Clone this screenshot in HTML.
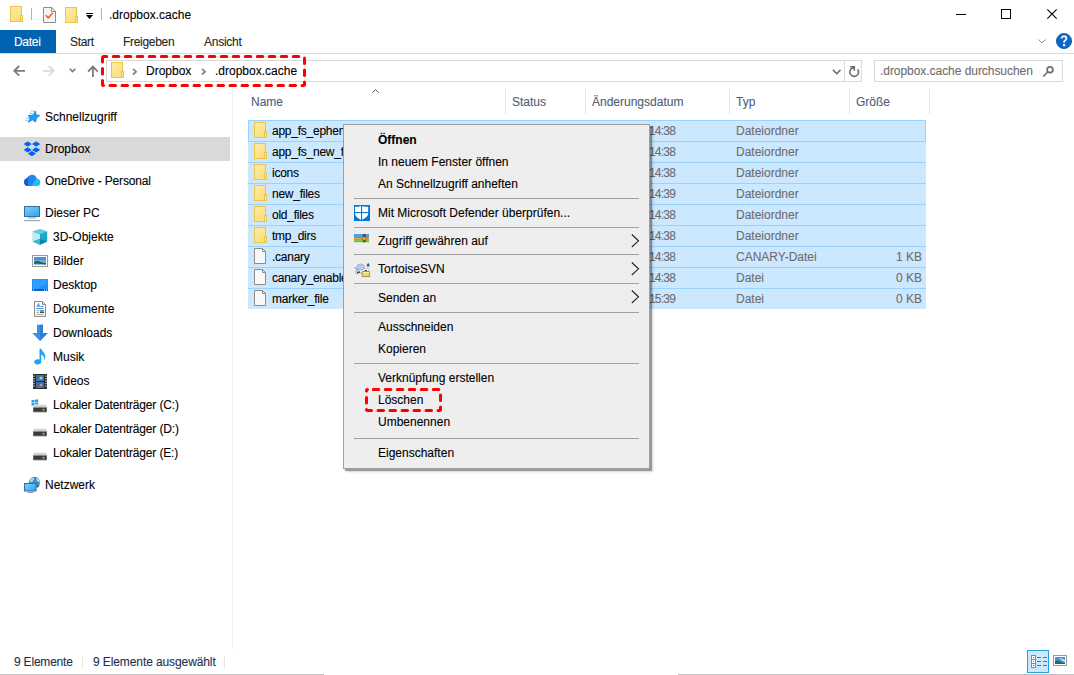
<!DOCTYPE html>
<html><head><meta charset="utf-8">
<style>
*{margin:0;padding:0;box-sizing:border-box}
html,body{width:1074px;height:675px;overflow:hidden;background:#fff}
body{position:relative;font-family:"Liberation Sans",sans-serif;font-size:12px;color:#000}
.a{position:absolute}
.t{position:absolute;white-space:nowrap;line-height:16px;-webkit-text-stroke:0.1px currentColor}
svg{position:absolute;overflow:visible}
.hd{color:#4c607a}
.sep{position:absolute;width:1px;background:#e5e5e5}
.g{color:#6d6d6d}
</style></head><body>
<svg width="0" height="0" style="position:absolute"><defs>
<linearGradient id="fg" x1="0" y1="0" x2="0.6" y2="1"><stop offset="0" stop-color="#fdeba6"/><stop offset="1" stop-color="#fbdf80"/></linearGradient>
<linearGradient id="od" x1="0" y1="0" x2="1" y2="0.3"><stop offset="0" stop-color="#1552c8"/><stop offset="0.5" stop-color="#1f8af0"/><stop offset="1" stop-color="#22c6f6"/></linearGradient>
<linearGradient id="scr" x1="0" y1="0" x2="1" y2="1"><stop offset="0" stop-color="#7fd0fb"/><stop offset="1" stop-color="#2aa2f2"/></linearGradient>
<linearGradient id="drv" x1="0" y1="0" x2="0" y2="1"><stop offset="0" stop-color="#e8e8e8"/><stop offset="1" stop-color="#b8b8b8"/></linearGradient>
</defs></svg>
<svg style="left:10px;top:6px" width="13" height="16"><rect x="0.5" y="0.5" width="11" height="15" fill="url(#fg)" stroke="#eac548"/><rect x="10.5" y="9.5" width="2" height="6" fill="#fde68e" stroke="#eac548"/></svg>
<div class="a" style="left:31px;top:8px;width:1px;height:12px;background:#b4b4b4"></div>
<svg style="left:43px;top:7px" width="13" height="16"><path d="M0.5 0.5H8.8L12.5 4.2V15.5H0.5Z" fill="#f4f4f4" stroke="#8c8c8c"/><path d="M8.5 0.5V4.5H12.5" fill="none" stroke="#8c8c8c"/><path d="M2.8 8.3L5.2 10.8L9.8 6" fill="none" stroke="#ef5b25" stroke-width="1.5"/></svg>
<svg style="left:65px;top:7px" width="13" height="16"><rect x="0.5" y="0.5" width="11" height="15" fill="url(#fg)" stroke="#eac548"/><rect x="10.5" y="9.5" width="2" height="6" fill="#fde68e" stroke="#eac548"/></svg>
<svg style="left:86px;top:12px" width="8" height="8"><rect x="0" y="1" width="7" height="1" fill="#000"/><path d="M0 3H7L3.5 7Z" fill="#000"/></svg>
<div class="a" style="left:101px;top:8px;width:1px;height:12px;background:#b4b4b4"></div>
<div class="t" style="left:109px;top:7px;">.dropbox.cache</div>
<div class="a" style="left:956px;top:14px;width:10px;height:1px;background:#000"></div>
<svg style="left:1001px;top:9px" width="11" height="11"><rect x="0.5" y="0.5" width="9" height="9" fill="none" stroke="#000"/></svg>
<svg style="left:1047px;top:9px" width="11" height="11"><path d="M0.3 0.3L9.7 9.7M9.7 0.3L0.3 9.7" stroke="#000" stroke-width="1.1"/></svg>
<div class="a" style="left:0;top:30px;width:56px;height:23px;background:#0063b1"></div>
<div class="t" style="left:14px;top:34px;color:#fff;letter-spacing:-0.3px">Datei</div>
<div class="t" style="left:70px;top:34px;color:#262626;letter-spacing:-0.3px">Start</div>
<div class="t" style="left:123px;top:34px;color:#262626;letter-spacing:-0.3px">Freigeben</div>
<div class="t" style="left:204px;top:34px;color:#262626;letter-spacing:-0.25px">Ansicht</div>
<svg style="left:1038px;top:39px" width="9" height="6"><path d="M0.5 0.5L4 4L7.5 0.5" fill="none" stroke="#8c8c8c"/></svg>
<svg style="left:1056px;top:33px" width="16" height="16"><circle cx="8" cy="8" r="7.6" fill="#0a66c8" stroke="#0b4f9e" stroke-width="0.8"/><path d="M5.6 5.6C5.6 4 6.6 3.3 8 3.3C9.5 3.3 10.4 4.2 10.4 5.4C10.4 6.6 9.6 7.1 8.9 7.6C8.3 8 8.1 8.4 8.1 9.3V9.8" fill="none" stroke="#eaf2fb" stroke-width="1.9"/><rect x="7" y="11" width="2.2" height="2.2" fill="#eaf2fb"/></svg>
<div class="a" style="left:0;top:53px;width:1074px;height:1px;background:#dadbdc"></div>
<svg style="left:13px;top:65px" width="13" height="12"><path d="M12 5.8H1.8M6.2 1L1.3 5.8L6.2 10.6" fill="none" stroke="#7a7a7a" stroke-width="1.8"/></svg>
<svg style="left:43px;top:65px" width="13" height="12"><path d="M0 5.8H10.2M5.8 1L10.7 5.8L5.8 10.6" fill="none" stroke="#d9d9d9" stroke-width="1.8"/></svg>
<svg style="left:69px;top:68px" width="8" height="5"><path d="M0.7 0.7L3.5 3.5L6.3 0.7" fill="none" stroke="#7a7a7a" stroke-width="1.6"/></svg>
<svg style="left:87px;top:65px" width="12" height="13"><path d="M5.9 12V1.8M1.1 6.6L5.9 1.6L10.7 6.6" fill="none" stroke="#7a7a7a" stroke-width="1.8"/></svg>
<div class="a" style="left:106px;top:60px;width:756px;height:22px;border:1px solid #d9d9d9"></div>
<div class="a" style="left:844px;top:60px;width:1px;height:22px;background:#d9d9d9"></div>
<svg style="left:111px;top:62px" width="13" height="16"><rect x="0.5" y="0.5" width="11" height="15" fill="url(#fg)" stroke="#eac548"/><rect x="10.5" y="9.5" width="2" height="6" fill="#fde68e" stroke="#eac548"/></svg>
<svg style="left:132px;top:68px" width="6" height="8"><path d="M1 0.9L4 3.7L1 6.5" fill="none" stroke="#858585" stroke-width="1.8"/></svg>
<div class="t" style="left:146px;top:63px;">Dropbox</div>
<svg style="left:201px;top:68px" width="6" height="8"><path d="M1 0.9L4 3.7L1 6.5" fill="none" stroke="#858585" stroke-width="1.8"/></svg>
<div class="t" style="left:215px;top:63px;">.dropbox.cache</div>
<svg style="left:832px;top:69px" width="10" height="6"><path d="M0.9 0.9L4.7 4.7L8.5 0.9" fill="none" stroke="#6d6d6d" stroke-width="1.6"/></svg>
<svg style="left:846px;top:64px" width="14" height="14"><path d="M8 3.6A4.4 4.4 0 1 0 11.6 5.2" fill="none" stroke="#6d6d6d" stroke-width="1.6"/><path d="M4.2 2.7H8.3V6.8" fill="none" stroke="#6d6d6d" stroke-width="1.6"/></svg>
<div class="a" style="left:874px;top:60px;width:189px;height:22px;border:1px solid #d9d9d9"></div>
<div class="t" style="left:880px;top:63px;color:#6d6d6d;letter-spacing:-0.05px">.dropbox.cache durchsuchen</div>
<svg style="left:1042px;top:66px" width="12" height="12"><circle cx="8" cy="3.8" r="2.9" fill="none" stroke="#6d6d6d" stroke-width="1.7"/><path d="M5.8 6L1.3 10.5" stroke="#6d6d6d" stroke-width="1.7"/></svg>
<svg style="left:0;top:0" width="1074" height="675"><rect x="102.5" y="56.5" width="202" height="29" fill="none" stroke="#ff0000" stroke-width="3" stroke-dasharray="5.5 6.5" stroke-dashoffset="2.2" stroke-linecap="round" rx="1"/></svg>
<div class="a" style="left:232px;top:89px;width:1px;height:560px;background:#f0f0f0"></div>
<div class="a" style="left:0;top:137px;width:230px;height:24px;background:#d9d9d9"></div>
<div class="t" style="left:45px;top:109px;">Schnellzugriff</div>
<div class="t" style="left:45px;top:141px;">Dropbox</div>
<div class="t" style="left:45px;top:173px;letter-spacing:-0.15px">OneDrive - Personal</div>
<div class="t" style="left:45px;top:205px;">Dieser PC</div>
<div class="t" style="left:53px;top:229px;">3D-Objekte</div>
<div class="t" style="left:53px;top:253px;">Bilder</div>
<div class="t" style="left:53px;top:277px;">Desktop</div>
<div class="t" style="left:53px;top:301px;">Dokumente</div>
<div class="t" style="left:53px;top:325px;">Downloads</div>
<div class="t" style="left:53px;top:349px;">Musik</div>
<div class="t" style="left:53px;top:373px;">Videos</div>
<div class="t" style="left:53px;top:397px;letter-spacing:-0.15px">Lokaler Datenträger (C:)</div>
<div class="t" style="left:53px;top:421px;letter-spacing:-0.15px">Lokaler Datenträger (D:)</div>
<div class="t" style="left:53px;top:445px;letter-spacing:-0.15px">Lokaler Datenträger (E:)</div>
<div class="t" style="left:45px;top:477px;">Netzwerk</div>
<svg style="left:22px;top:108px" width="20" height="16"><path d="M3 12.3H6.2M4 10.3H7.1M7.1 5.3H10.4M9 3.1H13.3" stroke="#58b4f0" stroke-width="1" opacity="0.7"/><path d="M13.5 3L14.2 7.1L17.9 7.5L14.6 10.1L13.6 14.1L10.5 11.9L6.3 14.3L8 10.1L6.2 7.5L10.9 7.1Z" fill="#1ea0f2" stroke="#0d7fd6" stroke-width="0.7" stroke-linejoin="round"/></svg>
<svg style="left:22px;top:140px" width="20" height="18"><g fill="#0061fe" stroke="#0061fe" stroke-width="1" stroke-linejoin="round"><path d="M2.3000000000000003 4L5.7 1.9L9.1 4L5.7 6.1Z"/><path d="M10.7 4L14.1 1.9L17.5 4L14.1 6.1Z"/><path d="M2.3000000000000003 9.9L5.7 7.800000000000001L9.1 9.9L5.7 12.0Z"/><path d="M10.7 9.9L14.1 7.800000000000001L17.5 9.9L14.1 12.0Z"/><path d="M6.5 13.6L9.9 11.5L13.3 13.6L9.9 15.7Z"/></g></svg>
<svg style="left:22px;top:172px" width="20" height="16"><path d="M4.6 13.9H15C17 13.9 18.2 12.3 18.2 10.5C18.2 8.4 16.7 6.9 14.9 6.8C14.2 4.3 12.3 2.8 10.1 2.8C7.9 2.8 6.1 4.1 5.4 6C3.5 6.3 2 8 2 10C2 12.2 3.4 13.9 4.6 13.9Z" fill="#2288ee"/><path d="M10 13.9C11.6 11 12.8 7.8 14.9 6.8C16.7 6.9 18.2 8.4 18.2 10.5C18.2 12.3 17 13.9 15 13.9Z" fill="#20c0f5"/><path d="M4.6 13.9C3.4 13.9 2 12.2 2 10C2 8 3.5 6.3 5.4 6C5.8 5 6.4 4.4 7.2 3.9C6 6.5 5.4 10 6.6 13.9Z" fill="#1448c0" opacity="0.7"/></svg>
<svg style="left:24px;top:206px" width="17" height="16"><rect x="0.5" y="0.5" width="15" height="10" fill="url(#scr)" stroke="#2f6e9e"/><rect x="4" y="11.5" width="8" height="1" fill="#8aa0b4"/><rect x="0" y="14" width="16" height="1.2" fill="#9aaabb"/></svg>
<svg style="left:32px;top:229px" width="16" height="16"><path d="M8 0.3L15.2 2.6V12.6L8 15.7L0.8 12.6V2.6Z" fill="#1ba7cc"/><path d="M0.8 2.6L8 5.2V15.7L0.8 12.6Z" fill="#bfeaf1"/><path d="M0.8 2.6L8 0.3L15.2 2.6L8 5.2Z" fill="#5ccfe2"/><path d="M0.8 12.6L8 10L15.2 12.6L8 15.7Z" fill="#0d86a6"/><path d="M0.8 12.6L8 10V15.7Z" fill="#37b9d6"/></svg>
<svg style="left:32px;top:255px" width="16" height="12"><rect x="0.5" y="0.5" width="15" height="11" fill="#fff" stroke="#9a9a9a"/><rect x="2" y="2" width="12" height="8" fill="#6aa8e0"/><path d="M2 5H14V2H2Z" fill="#4a8ee0"/><path d="M2 10V7C4 5.6 6.5 5.6 8.5 7C10.5 7.6 12.5 7.8 14 8.2V10Z" fill="#2e5d3e"/><path d="M2 10V9C6 8.5 10 9 14 9.5V10Z" fill="#8fc0e8"/></svg>
<svg style="left:32px;top:279px" width="16" height="12"><rect x="0" y="0" width="16" height="12" fill="#1e90ff"/><path d="M1 1H15V4L3 11H1Z" fill="#42a8ff" opacity="0.5"/><rect x="0" y="10" width="16" height="2" fill="#0b62c4"/><rect x="1" y="10.5" width="1" height="1" fill="#fff"/><rect x="12" y="10.5" width="1" height="1" fill="#fff"/><rect x="14" y="10.5" width="1" height="1" fill="#fff"/></svg>
<svg style="left:34px;top:301px" width="13" height="16"><path d="M0.5 0.5H8.5L11.5 3.5V15.5H0.5Z" fill="#fafafa" stroke="#8c8c8c"/><path d="M8.5 0.5V3.5H11.5" fill="none" stroke="#8c8c8c"/><path d="M3 6L4.5 2.5L5.5 6M3.5 4.8H5M6.5 5.5H9.5M2.5 7.5H9.5" stroke="#2f88e0" stroke-width="0.9" fill="none"/><path d="M2.5 9.5H5M2.5 11.5H5M2.5 13.5H9.5" stroke="#a0a0a0" stroke-width="0.9"/><rect x="6" y="9" width="4" height="3" fill="#5a9ae0"/><rect x="6" y="11" width="4" height="1" fill="#2e5d3e"/></svg>
<svg style="left:32px;top:324px" width="16" height="18"><path d="M5 0.8H11V9H15.8L8 17L0.2 9H5Z" fill="#3f8fe0"/><path d="M8 0.8H11V9H15.8L8 17Z" fill="#2f7fd6"/></svg>
<svg style="left:33px;top:348px" width="13" height="17"><path d="M6.5 0.8H8.3C8.6 3.2 12.3 4.8 12.3 8.5C12.3 10 11.8 11.2 11.2 12C11.4 9 10.2 7.2 8.3 6.5V13.6C8.3 15.4 6.6 16.6 4.6 16.6C2.6 16.6 1.2 15.6 1.2 14.1C1.2 12.4 2.8 11.3 4.7 11.3C5.4 11.3 6 11.4 6.5 11.7Z" fill="#1ea3f2"/></svg>
<svg style="left:33px;top:374px" width="14" height="15"><rect x="0" y="0" width="14" height="15" fill="#2b2b2b"/><rect x="3" y="1" width="8" height="6" fill="#2f6fc8"/><rect x="3" y="8" width="8" height="6" fill="#2f6fc8"/><circle cx="8" cy="4" r="1.6" fill="#e8c040"/><rect x="4" y="5" width="2" height="2" fill="#3aa040"/><circle cx="8" cy="11" r="1.3" fill="#e0a020"/><rect x="4" y="12" width="3" height="2" fill="#e04030"/><path d="M1 1.5V2.8M1 4V5.3M1 6.5V7.8M1 9V10.3M1 11.5V12.8M13 1.5V2.8M13 4V5.3M13 6.5V7.8M13 9V10.3M13 11.5V12.8" stroke="#e8e8e8" stroke-width="1.2"/></svg>
<svg style="left:31px;top:399px" width="8" height="7"><g fill="#1ea3f2"><rect x="0.5" y="1" width="3" height="2.5"/><rect x="4" y="0.5" width="3.2" height="3"/><rect x="0.5" y="4" width="3" height="2.5"/><rect x="4" y="4" width="3.2" height="3"/></g></svg><svg style="left:33px;top:404px" width="14" height="9"><path d="M1.5 0.2H12.5L13.8 3.3V4H0.2V3.3Z" fill="url(#drv)"/><rect x="0.2" y="3.6" width="13.6" height="4.4" fill="#3b3b3b"/><rect x="0.2" y="7.6" width="13.6" height="0.8" fill="#8a8a8a"/><circle cx="10.5" cy="5.8" r="1.1" fill="#3ee03e"/></svg>
<svg style="left:33px;top:428px" width="14" height="9"><path d="M1.5 0.2H12.5L13.8 3.3V4H0.2V3.3Z" fill="url(#drv)"/><rect x="0.2" y="3.6" width="13.6" height="4.4" fill="#3b3b3b"/><rect x="0.2" y="7.6" width="13.6" height="0.8" fill="#8a8a8a"/><circle cx="10.5" cy="5.8" r="1.1" fill="#3ee03e"/></svg>
<svg style="left:33px;top:452px" width="14" height="9"><path d="M1.5 0.2H12.5L13.8 3.3V4H0.2V3.3Z" fill="url(#drv)"/><rect x="0.2" y="3.6" width="13.6" height="4.4" fill="#3b3b3b"/><rect x="0.2" y="7.6" width="13.6" height="0.8" fill="#8a8a8a"/><circle cx="10.5" cy="5.8" r="1.1" fill="#3ee03e"/></svg>
<svg style="left:23px;top:476px" width="18" height="18"><circle cx="11.4" cy="6.4" r="5.6" fill="#3f8fc0"/><path d="M7.5 3C8.5 2 10 1.5 11 2.2C11.5 3.5 10 4.5 9.5 5.5C8.8 6.8 7 6 6.6 5Z" fill="#a8d8f0"/><path d="M13.5 2C15 2.8 16.5 4.5 16.8 6.5C15.8 6 14.6 5 13.5 4.5Z" fill="#c8e8f8"/><path d="M14 8.5C15 9 16 9.5 16.6 9C16 10.5 15 11.5 14 12Z" fill="#2a6a98"/><rect x="1.5" y="7.5" width="11.5" height="7.5" fill="url(#scr)" stroke="#2f6e9e"/><rect x="4.5" y="16" width="6" height="1" fill="#8a98a8"/></svg>
<div class="t hd" style="left:251px;top:94px;">Name</div>
<svg style="left:372px;top:89px" width="8" height="5"><path d="M0.4 3.7L3.5 0.5L6.6 3.7" fill="none" stroke="#555" stroke-width="1"/></svg>
<div class="sep" style="left:505px;top:89px;height:25px"></div>
<div class="sep" style="left:585px;top:89px;height:25px"></div>
<div class="sep" style="left:729px;top:89px;height:25px"></div>
<div class="sep" style="left:849px;top:89px;height:25px"></div>
<div class="sep" style="left:929px;top:89px;height:25px"></div>
<div class="t hd" style="left:512px;top:94px;">Status</div>
<div class="t hd" style="left:592px;top:94px;">Änderungsdatum</div>
<div class="t hd" style="left:736px;top:94px;">Typ</div>
<div class="t hd" style="left:856px;top:94px;">Größe</div>
<div class="a" style="left:248px;top:120px;width:678px;height:189px;background:#cce8ff"></div>
<div class="a" style="left:248px;top:141px;width:678px;height:1px;background:#99d1ff"></div>
<div class="a" style="left:248px;top:162px;width:678px;height:1px;background:#99d1ff"></div>
<div class="a" style="left:248px;top:183px;width:678px;height:1px;background:#99d1ff"></div>
<div class="a" style="left:248px;top:204px;width:678px;height:1px;background:#99d1ff"></div>
<div class="a" style="left:248px;top:225px;width:678px;height:1px;background:#99d1ff"></div>
<div class="a" style="left:248px;top:246px;width:678px;height:1px;background:#99d1ff"></div>
<div class="a" style="left:248px;top:267px;width:678px;height:1px;background:#99d1ff"></div>
<div class="a" style="left:248px;top:288px;width:678px;height:1px;background:#99d1ff"></div>
<div class="a" style="left:248px;top:120px;width:678px;height:22px;border:1px solid #99d1ff"></div>
<svg style="left:254px;top:122px" width="13" height="16"><rect x="0.5" y="0.5" width="11" height="15" fill="url(#fg)" stroke="#eac548"/><rect x="10.5" y="9.5" width="2" height="6" fill="#fde68e" stroke="#eac548"/></svg>
<div class="t" style="left:272px;top:123px;letter-spacing:-0.25px">app_fs_ephemeral</div>
<div class="t" style="left:649px;top:123px;color:#6d6d6d;letter-spacing:-0.8px">14:38</div>
<div class="t" style="left:736px;top:123px;color:#6d6d6d">Dateiordner</div>
<svg style="left:254px;top:143px" width="13" height="16"><rect x="0.5" y="0.5" width="11" height="15" fill="url(#fg)" stroke="#eac548"/><rect x="10.5" y="9.5" width="2" height="6" fill="#fde68e" stroke="#eac548"/></svg>
<div class="t" style="left:272px;top:144px;letter-spacing:-0.25px">app_fs_new_files</div>
<div class="t" style="left:649px;top:144px;color:#6d6d6d;letter-spacing:-0.8px">14:38</div>
<div class="t" style="left:736px;top:144px;color:#6d6d6d">Dateiordner</div>
<svg style="left:254px;top:164px" width="13" height="16"><rect x="0.5" y="0.5" width="11" height="15" fill="url(#fg)" stroke="#eac548"/><rect x="10.5" y="9.5" width="2" height="6" fill="#fde68e" stroke="#eac548"/></svg>
<div class="t" style="left:272px;top:165px;letter-spacing:-0.25px">icons</div>
<div class="t" style="left:649px;top:165px;color:#6d6d6d;letter-spacing:-0.8px">14:38</div>
<div class="t" style="left:736px;top:165px;color:#6d6d6d">Dateiordner</div>
<svg style="left:254px;top:185px" width="13" height="16"><rect x="0.5" y="0.5" width="11" height="15" fill="url(#fg)" stroke="#eac548"/><rect x="10.5" y="9.5" width="2" height="6" fill="#fde68e" stroke="#eac548"/></svg>
<div class="t" style="left:272px;top:186px;letter-spacing:-0.25px">new_files</div>
<div class="t" style="left:649px;top:186px;color:#6d6d6d;letter-spacing:-0.8px">14:39</div>
<div class="t" style="left:736px;top:186px;color:#6d6d6d">Dateiordner</div>
<svg style="left:254px;top:206px" width="13" height="16"><rect x="0.5" y="0.5" width="11" height="15" fill="url(#fg)" stroke="#eac548"/><rect x="10.5" y="9.5" width="2" height="6" fill="#fde68e" stroke="#eac548"/></svg>
<div class="t" style="left:272px;top:207px;letter-spacing:-0.25px">old_files</div>
<div class="t" style="left:649px;top:207px;color:#6d6d6d;letter-spacing:-0.8px">14:38</div>
<div class="t" style="left:736px;top:207px;color:#6d6d6d">Dateiordner</div>
<svg style="left:254px;top:227px" width="13" height="16"><rect x="0.5" y="0.5" width="11" height="15" fill="url(#fg)" stroke="#eac548"/><rect x="10.5" y="9.5" width="2" height="6" fill="#fde68e" stroke="#eac548"/></svg>
<div class="t" style="left:272px;top:228px;letter-spacing:-0.25px">tmp_dirs</div>
<div class="t" style="left:649px;top:228px;color:#6d6d6d;letter-spacing:-0.8px">14:38</div>
<div class="t" style="left:736px;top:228px;color:#6d6d6d">Dateiordner</div>
<svg style="left:254px;top:248px" width="13" height="16"><path d="M0.5 0.5H8.5L11.5 3.5V15.5H0.5Z" fill="#f8f8f8" stroke="#8c8c8c"/><path d="M8.5 0.5V3.5H11.5" fill="none" stroke="#8c8c8c"/></svg>
<div class="t" style="left:272px;top:249px;letter-spacing:-0.25px">.canary</div>
<div class="t" style="left:649px;top:249px;color:#6d6d6d;letter-spacing:-0.8px">14:38</div>
<div class="t" style="left:736px;top:249px;color:#6d6d6d">CANARY-Datei</div>
<div class="t" style="right:152px;top:249px;color:#6d6d6d">1 KB</div>
<svg style="left:254px;top:269px" width="13" height="16"><path d="M0.5 0.5H8.5L11.5 3.5V15.5H0.5Z" fill="#f8f8f8" stroke="#8c8c8c"/><path d="M8.5 0.5V3.5H11.5" fill="none" stroke="#8c8c8c"/></svg>
<div class="t" style="left:272px;top:270px;letter-spacing:-0.25px">canary_enabled</div>
<div class="t" style="left:649px;top:270px;color:#6d6d6d;letter-spacing:-0.8px">14:38</div>
<div class="t" style="left:736px;top:270px;color:#6d6d6d">Datei</div>
<div class="t" style="right:152px;top:270px;color:#6d6d6d">0 KB</div>
<svg style="left:254px;top:290px" width="13" height="16"><path d="M0.5 0.5H8.5L11.5 3.5V15.5H0.5Z" fill="#f8f8f8" stroke="#8c8c8c"/><path d="M8.5 0.5V3.5H11.5" fill="none" stroke="#8c8c8c"/></svg>
<div class="t" style="left:272px;top:291px;letter-spacing:-0.25px">marker_file</div>
<div class="t" style="left:649px;top:291px;color:#6d6d6d;letter-spacing:-0.8px">15:39</div>
<div class="t" style="left:736px;top:291px;color:#6d6d6d">Datei</div>
<div class="t" style="right:152px;top:291px;color:#6d6d6d">0 KB</div>
<div class="a" style="left:343px;top:124px;width:307px;height:345px;background:#eeeeee;border:1px solid #a0a0a0;box-shadow:2px 2px 1px rgba(0,0,0,0.33),3px 3px 3px rgba(0,0,0,0.12)"></div>
<div class="t" style="left:378px;top:132px;font-weight:bold">Öffnen</div>
<div class="t" style="left:378px;top:154px;">In neuem Fenster öffnen</div>
<div class="t" style="left:378px;top:176px;">An Schnellzugriff anheften</div>
<div class="t" style="left:378px;top:205px;">Mit Microsoft Defender überprüfen...</div>
<div class="t" style="left:378px;top:233px;">Zugriff gewähren auf</div>
<div class="t" style="left:378px;top:261px;">TortoiseSVN</div>
<div class="t" style="left:378px;top:290px;">Senden an</div>
<div class="t" style="left:378px;top:319px;">Ausschneiden</div>
<div class="t" style="left:378px;top:341px;">Kopieren</div>
<div class="t" style="left:378px;top:370px;">Verknüpfung erstellen</div>
<div class="t" style="left:378px;top:392px;">Löschen</div>
<div class="t" style="left:378px;top:414px;">Umbenennen</div>
<div class="t" style="left:378px;top:445px;">Eigenschaften</div>
<div class="a" style="left:354px;top:198px;width:285px;height:1px;background:#a0a0a0"></div>
<div class="a" style="left:354px;top:227px;width:285px;height:1px;background:#a0a0a0"></div>
<div class="a" style="left:354px;top:254px;width:285px;height:1px;background:#a0a0a0"></div>
<div class="a" style="left:354px;top:283px;width:285px;height:1px;background:#a0a0a0"></div>
<div class="a" style="left:354px;top:312px;width:285px;height:1px;background:#a0a0a0"></div>
<div class="a" style="left:354px;top:363px;width:285px;height:1px;background:#a0a0a0"></div>
<div class="a" style="left:354px;top:438px;width:285px;height:1px;background:#a0a0a0"></div>
<svg style="left:631px;top:234px" width="9" height="14"><path d="M0.8 0.5L7.5 6.8L0.8 13" fill="none" stroke="#222" stroke-width="1.1"/></svg>
<svg style="left:631px;top:262px" width="9" height="14"><path d="M0.8 0.5L7.5 6.8L0.8 13" fill="none" stroke="#222" stroke-width="1.1"/></svg>
<svg style="left:631px;top:290px" width="9" height="14"><path d="M0.8 0.5L7.5 6.8L0.8 13" fill="none" stroke="#222" stroke-width="1.1"/></svg>
<svg style="left:354px;top:205px" width="16" height="16"><rect width="16" height="16" fill="#0078d7"/><path d="M1 1.8C3.5 1.8 5.5 1.4 7.5 0.9C9.5 1.4 11.7 1.8 14.2 1.8V8.2C14.2 11.2 11 13.6 7.5 15.1C4 13.6 1 11.2 1 8.2Z" fill="#fff"/><rect x="7" y="0" width="1.1" height="16" fill="#0078d7"/><rect x="0" y="7" width="16" height="1.1" fill="#0078d7"/></svg>
<svg style="left:354px;top:234px" width="16" height="9"><rect x="0" y="0" width="15" height="4.2" fill="#3aa8f0"/><rect x="0" y="4.2" width="15" height="2" fill="#ff8a00"/><rect x="0" y="6.2" width="15" height="2" fill="#62c830"/><rect x="8.8" y="0" width="3" height="8.2" fill="#8a3a10"/><circle cx="10.3" cy="4.6" r="1.8" fill="#e8b040" stroke="#9a5a18" stroke-width="0.6"/></svg>
<svg style="left:352px;top:260px" width="20" height="20"><path d="M2.5 7.5L6 10" stroke="#9aa6b8" stroke-width="1.5"/><path d="M3.5 11.5C4.5 10.5 6 10.5 7 11.5C7.5 12.5 6.5 14 5 14C4 14 3.3 12.8 3.5 11.5Z" fill="#f2f2f2" stroke="#8a96a8" stroke-width="0.8"/><path d="M5 12.6L7.8 12" stroke="#334" stroke-width="1.3"/><path d="M8.5 13.5L10 12.5" stroke="#9aa6b8" stroke-width="1.2"/><ellipse cx="8.6" cy="7" rx="3.8" ry="3" fill="#aecbfa" stroke="#8aa6d8" stroke-width="0.7"/><path d="M12.2 8.4H16.8V11.8H12.2Z" fill="#fafafa" stroke="#b0b0b0" stroke-width="0.6"/><rect x="13" y="10" width="2" height="1" fill="#333"/><path d="M15 6.5C14.6 5.5 15 4 16.2 3C17.4 4 17.8 5.5 17.2 6.5Z" fill="#1a5a8a"/><path d="M15.5 6.5V8.4" stroke="#bbb" stroke-width="0.8"/><path d="M10.2 11.6H17.6V16.6H10.2Z" fill="#f4d46a" stroke="#8a6a20" stroke-width="0.7"/><path d="M10.6 12H17.2V13.2H10.6Z" fill="#fbeaa0"/></svg>
<svg style="left:0;top:0" width="1074" height="675"><rect x="366.5" y="389.5" width="74" height="21" fill="none" stroke="#ff0000" stroke-width="3" stroke-dasharray="5.5 6.5" stroke-dashoffset="-5.8" stroke-linecap="round" rx="1"/></svg>
<div class="t" style="left:14px;top:654px;color:#1e3050;letter-spacing:-0.2px">9 Elemente</div>
<div class="a" style="left:82px;top:656px;width:1px;height:12px;background:#e6e6e6"></div>
<div class="t" style="left:93px;top:654px;color:#1e3050;letter-spacing:-0.1px">9 Elemente ausgewählt</div>
<div class="a" style="left:224px;top:656px;width:1px;height:12px;background:#e6e6e6"></div>
<div class="a" style="left:1027px;top:650px;width:22px;height:23px;background:#cce8ff;border:1px solid #26a0da"></div>
<svg style="left:1031px;top:655px" width="17" height="13"><rect x="0.5" y="0.5" width="4" height="12" fill="#fff" stroke="#8a8a8a"/><path d="M1 4.5H4M1 8.5H4" stroke="#8a8a8a"/><rect x="2" y="2" width="1" height="1" fill="#3a7a5a"/><rect x="2" y="6" width="1" height="1" fill="#4a90e2"/><rect x="2" y="10" width="1" height="1" fill="#e02020"/><path d="M6 2.5H10M12 2.5H16M6 6.5H10M12 6.5H16M6 10.5H10M12 10.5H16" stroke="#6d6d6d" stroke-width="1"/></svg>
<svg style="left:1053px;top:655px" width="14" height="11"><rect x="0.5" y="0.5" width="13" height="10" fill="#fff" stroke="#9a9a9a"/><rect x="2" y="2" width="10" height="7" fill="#4a90e2"/><path d="M2 9V6C4 5 6 5.5 8 7C10 7.5 11 8 12 8V9Z" fill="#2e6a3a"/><path d="M6 3C8 3 10 4 12 5V7C10 6 8 5 6 3Z" fill="#cfe8f7"/></svg>
<div class="a" style="left:0;top:674px;width:324px;height:1px;background:#bfbfbf"></div>
<div class="a" style="left:678px;top:674px;width:396px;height:1px;background:#bfbfbf"></div>
</body></html>
